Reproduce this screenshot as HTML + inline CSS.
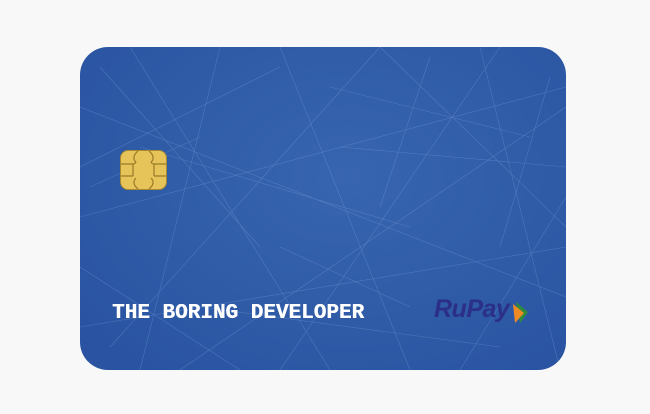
<!DOCTYPE html>
<html><head><style>
html,body{margin:0;padding:0;width:650px;height:414px;background:#f8f8f8;overflow:hidden}
.card{position:absolute;left:80px;top:47px;width:486px;height:323px;border-radius:28px;overflow:hidden;background:radial-gradient(ellipse at 55% 40%,#3865b0 0%,#2e5aa6 55%,#2952a0 100%)}
.chip{position:absolute;left:120px;top:150px;width:47px;height:40px;border-radius:8px;background:#e6c45a;border:1px solid #a88a30;box-sizing:border-box}
.name{position:absolute;left:112px;top:302px;font-family:"Liberation Mono",monospace;font-weight:bold;font-size:21px;color:#fff;letter-spacing:0px;text-shadow:0.4px 0 0 #fff}
.rupay{position:absolute;left:434px;top:295px;font-family:"Liberation Sans",sans-serif;font-weight:bold;font-style:italic;font-size:25px;color:#2b2f86;letter-spacing:-0.5px}
</style></head><body>
<div class="card">
<svg width="486" height="323" style="position:absolute;left:0;top:0" stroke="#9dbbec" stroke-opacity="0.3" stroke-width="0.6" fill="none">
<path d="M0 120 L200 20 M30 300 L300 0 M100 323 L486 60 M200 323 L420 0 M0 60 L486 250 M50 0 L250 323 M300 0 L486 180 M380 323 L486 150 M0 220 L160 323 M140 0 L60 323 M260 100 L486 120 M0 170 L486 40 M330 323 L200 0 M400 0 L480 323 M0 280 L486 200 M20 20 L180 200 M250 40 L450 90 M120 260 L420 300 M60 100 L330 180 M350 10 L300 160 M420 200 L470 30 M10 140 L120 90 M200 200 L330 260"/>
</svg>
</div>
<div class="chip">
<svg width="45" height="38" style="position:absolute;left:0;top:0" stroke="#9a7a28" stroke-width="1.2" fill="none">
<path d="M0 13 H12 M0 25 H12 M33 13 H45 M33 25 H45 M12 13 V25 M33 13 V25 M17 0 C12 4 12 9 15 11 M28 0 C33 4 33 9 30 11 M15 27 C12 30 12 34 17 38 M30 27 C33 30 33 34 28 38 M15 11 C14 13 12 13 12 13 M30 11 C31 13 33 13 33 13"/>
</svg>
</div>
<div class="name">THE BORING DEVELOPER</div>
<div class="rupay">RuPay</div>
<svg width="16" height="22" style="position:absolute;left:513px;top:302px">
<polygon points="3,0 15,10 7,21" fill="#2e8b3e"/>
<polygon points="0,2 11,11 2,21" fill="#f08a24"/>
</svg>
</body></html>
